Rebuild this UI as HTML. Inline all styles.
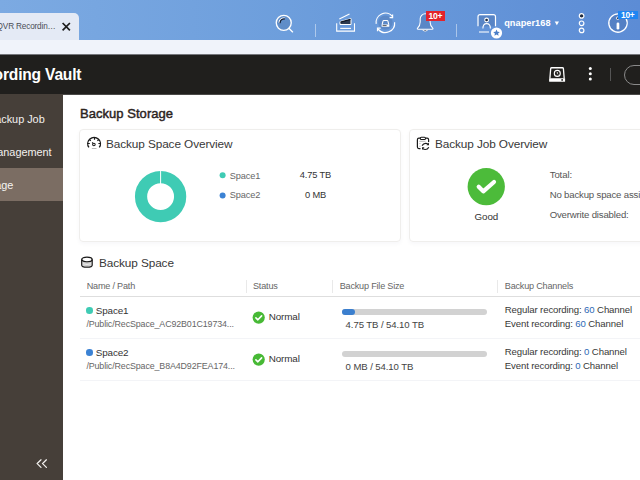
<!DOCTYPE html>
<html><head><meta charset="utf-8"><style>
html,body{margin:0;padding:0;width:640px;height:480px;overflow:hidden;background:#fff;}
body{position:relative;font-family:"Liberation Sans",sans-serif;}
.t{position:absolute;white-space:nowrap;line-height:20px;}
svg{overflow:visible;}
</style></head><body>
<div style="position:absolute;left:0px;top:0px;width:640px;height:40px;background:linear-gradient(90deg,#7caae2 0%,#6d9edc 45%,#5c8cd5 100%);"></div>
<div style="position:absolute;left:-20px;top:13px;width:99px;height:27px;background:#e4eaf5;border-top-right-radius:5px;"></div>
<div class="t" style="left:-3.4px;top:17.16px;font-size:8.2px;color:#4a4d55;font-weight:400;letter-spacing:-0.15px;">QVR Recordin&hellip;</div>
<svg style="position:absolute;left:61px;top:21px" width="10" height="10" viewBox="0 0 10 10"><path d="M1.6 2L8.9 9.3M8.9 2L1.6 9.3" stroke="#1e1e1e" stroke-width="1.7"/></svg>
<div style="position:absolute;left:0px;top:40px;width:640px;height:14px;background:#f0f3fa;"></div>
<svg style="position:absolute;left:272px;top:10px" width="26" height="26" viewBox="0 0 26 26"><circle cx="11.75" cy="12.85" r="7.5" fill="rgba(50,80,130,0.22)" stroke="#fff" fill="none" stroke-width="1.35"/><path d="M16.9 18.3L20.6 21.9" stroke="#fff" fill="none" stroke-width="1.35" stroke-linecap="round"/><path d="M7.2 12.3A4.7 4.7 0 0 1 12.3 8.1" stroke="#fff" stroke-width="1.3" fill="none" stroke-linecap="round"/><path d="M8.1 12.6A4 4 0 0 1 12.4 8.9" stroke="#1a2233" stroke-width="1.3" fill="none" stroke-linecap="round"/></svg>
<div style="position:absolute;left:314.5px;top:24px;width:1px;height:13px;background:rgba(255,255,255,0.45);"></div>
<div style="position:absolute;left:455.5px;top:24px;width:1px;height:13px;background:rgba(255,255,255,0.45);"></div>
<svg style="position:absolute;left:332px;top:8px" width="28" height="28" viewBox="0 0 28 28"><path d="M4.7 15.2V23.1H22.5V15.2" stroke="#fff" fill="none" stroke-width="1.1"/><path d="M8.2 20.4H19" stroke="#fff" fill="none" stroke-width="1.1"/><path d="M7.3 11.1L17.5 6.1" stroke="#fff" fill="none" stroke-width="1.1"/><path d="M8 13.6L19 10.6V16.5H8Z" fill="#2c3a50" stroke="#fff" stroke-width="1"/><path d="M8.5 14.2L18.5 11.4" stroke="#0e1522" stroke-width="1.2"/></svg>
<svg style="position:absolute;left:372px;top:8px" width="28" height="28" viewBox="0 0 28 28"><circle cx="13.4" cy="14.6" r="7.2" fill="rgba(50,80,130,0.22)"/><path d="M4.2 15.8A9.3 9.3 0 0 1 20.6 8.6" stroke="#fff" fill="none" stroke-width="1.2"/><path d="M20.6 6.6V9.6H17.6" stroke="#fff" fill="none" stroke-width="1.2"/><path d="M22.6 14.2A9.3 9.3 0 0 1 6.1 21" stroke="#fff" fill="none" stroke-width="1.2"/><path d="M5.5 23.3V20.2H8.7" stroke="#fff" fill="none" stroke-width="1.2"/><path d="M10.1 16.6L11 13.1Q11.2 12.5 11.8 12.5H15.1Q15.7 12.5 15.9 13.1L16.8 16.6" stroke="#fff" fill="none" stroke-width="1.1"/><rect x="9.6" y="16.4" width="7.7" height="2.4" rx="0.4" fill="#fff"/><rect x="10.6" y="17.2" width="4" height="0.9" fill="#444"/></svg>
<svg style="position:absolute;left:412px;top:8px" width="28" height="28" viewBox="0 0 28 28"><path d="M6 21.3Q5 21.3 5.4 20.4Q8.2 17.8 8.2 14V10.8A4.95 5 0 0 1 18.1 10.8V14Q18.1 17.8 20.9 20.4Q21.3 21.3 20.3 21.3Z" fill="rgba(50,80,130,0.22)" stroke="#fff" fill="none" stroke-width="1.05" stroke-linejoin="round"/><path d="M10.6 22.2Q13.15 24.2 15.7 22.2" fill="#1a2233" stroke="#fff" stroke-width="0.9"/></svg>
<div style="position:absolute;left:425.9px;top:10.9px;width:19.1px;height:9.8px;background:#e3232b;"></div>
<div class="t" style="left:428.6px;top:5.92px;font-size:8.6px;color:#fff;font-weight:700;letter-spacing:-0.3px;">10+</div>
<svg style="position:absolute;left:474px;top:11px" width="28" height="28" viewBox="0 0 28 28"><rect x="4.5" y="4.6" width="16.5" height="10.8" fill="rgba(50,80,130,0.22)"/><path d="M4 15.2V5.7A2 2 0 0 1 6 3.7H19.5A2 2 0 0 1 21.5 5.7V15.2" stroke="#fff" fill="none" stroke-width="1.2"/><circle cx="12.6" cy="9" r="1.9" fill="#1d2a40" stroke="#fff" stroke-width="1.1"/><path d="M8.9 17.6Q8.9 12.6 12.65 12.6Q16.4 12.6 16.4 17.6" stroke="#fff" fill="none" stroke-width="1.1"/><path d="M5 21H15" stroke="rgba(255,255,255,0.7)" stroke-width="1.5"/><circle cx="22.5" cy="22" r="5.6" fill="#fff"/><path d="M22.5 18.6L23.5 20.8L25.8 21L24.1 22.5L24.6 24.8L22.5 23.6L20.4 24.8L20.9 22.5L19.2 21L21.5 20.8Z" fill="#4a7ec8"/></svg>
<div class="t" style="left:504.2px;top:13.31px;font-size:9.2px;color:#fff;font-weight:700;letter-spacing:0.05px;">qnaper168</div>
<svg style="position:absolute;left:554px;top:21px" width="6" height="5" viewBox="0 0 6 5"><path d="M0.7 0.6H5L2.85 4.3Z" fill="#fff"/></svg>
<svg style="position:absolute;left:577px;top:11px" width="9" height="24" viewBox="0 0 9 24"><circle cx="4.6" cy="4.9" r="2.3" fill="#1f2a3d" stroke="#fff" stroke-width="1.2"/><circle cx="4.6" cy="12.3" r="2.3" fill="none" stroke="#fff" stroke-width="1.2"/><circle cx="4.6" cy="19.4" r="2.3" fill="none" stroke="#fff" stroke-width="1.2"/></svg>
<svg style="position:absolute;left:606px;top:11px" width="24" height="24" viewBox="0 0 24 24"><circle cx="12" cy="12" r="8.6" fill="rgba(50,80,130,0.2)"/><path d="M20.1 7.6A9.2 9.2 0 1 1 12 2.8" stroke="#fff" fill="none" stroke-width="1.3"/><circle cx="11.7" cy="7.2" r="1.3" fill="#2a3a55" stroke="#fff" stroke-width="0.9"/><rect x="10.6" y="11.5" width="2.7" height="7" rx="1.35" fill="#fff"/></svg>
<div style="position:absolute;left:618.2px;top:10.8px;width:19.7px;height:8.6px;background:#1f85f2;"></div>
<div class="t" style="left:621.0px;top:5.09px;font-size:8.4px;color:#fff;font-weight:700;letter-spacing:-0.25px;">10+</div>
<div style="position:absolute;left:0px;top:55px;width:640px;height:39px;background:#201f1d;"></div>
<div style="position:absolute;left:0px;top:54px;width:640px;height:1px;background:#75767b;"></div>
<div class="t" style="right:558.7px;top:65.09px;font-size:15.6px;color:#fff;font-weight:700;letter-spacing:-0.2px;">QVR Recording Vault</div>
<svg style="position:absolute;left:544px;top:62px" width="26" height="24" viewBox="0 0 26 24"><path d="M5.9 16.5L6.7 6.6Q6.8 5.75 7.7 5.75H18.4Q19.3 5.75 19.4 6.6L20.2 16.5" fill="none" stroke="#fff" stroke-width="1.3"/><rect x="5.1" y="16.2" width="16" height="3.6" rx="0.5" fill="#fff"/><rect x="17.3" y="17.2" width="1.7" height="1.5" fill="#201f1d"/><circle cx="13.3" cy="11.4" r="3" fill="none" stroke="#fff" stroke-width="1.1"/><path d="M13.3 10V11.5L14.2 12.2" stroke="#fff" stroke-width="0.8" fill="none"/></svg>
<svg style="position:absolute;left:587px;top:66px" width="7" height="16" viewBox="0 0 7 16"><circle cx="3.3" cy="2.5" r="1.5" fill="#fff"/><circle cx="3.3" cy="7.8" r="1.5" fill="#fff"/><circle cx="3.3" cy="13.1" r="1.5" fill="#fff"/></svg>
<div style="position:absolute;left:610px;top:68px;width:1px;height:13px;background:#555;"></div>
<div style="position:absolute;left:624px;top:65px;width:40px;height:18px;border:1px solid #8a8a8a;border-radius:10px;"></div>
<div style="position:absolute;left:0px;top:94px;width:63px;height:386px;background:#463f39;"></div>
<div style="position:absolute;left:0px;top:168px;width:63px;height:33px;background:#7b6d63;"></div>
<div class="t" style="right:595.3px;top:109.12px;font-size:10.9px;color:#f2f0ee;font-weight:400;letter-spacing:-0.02px;">Backup Job</div>
<div class="t" style="right:588.4px;top:141.92px;font-size:10.9px;color:#f2f0ee;font-weight:400;letter-spacing:-0.02px;">Space Management</div>
<div class="t" style="right:626.7px;top:175.22px;font-size:10.9px;color:#f6f4f2;font-weight:400;letter-spacing:-0.02px;">Storage</div>
<svg style="position:absolute;left:34px;top:456px" width="16" height="14" viewBox="0 0 16 14"><path d="M7 3.8L3.2 7.6L7 11.4M12.4 3.8L8.6 7.6L12.4 11.4" stroke="#f4f2f0" stroke-width="1.25" fill="none" stroke-linecap="round"/></svg>
<div style="position:absolute;left:63px;top:94px;width:577px;height:386px;background:#fff;"></div>
<div style="position:absolute;left:63px;top:94px;width:577px;height:0.8px;background:#4a4947;"></div>
<div class="t" style="left:80.0px;top:104.30px;font-size:13px;color:#2c241e;font-weight:400;letter-spacing:0.04px;-webkit-text-stroke:0.45px #2c241e;">Backup Storage</div>
<div style="position:absolute;left:79px;top:129px;width:322px;height:113px;border:1px solid #efeeec;border-radius:4px;box-sizing:border-box;box-shadow:0 2px 4px rgba(0,30,90,0.035);"></div>
<div style="position:absolute;left:409px;top:129px;width:260px;height:113px;border:1px solid #efeeec;border-radius:4px;box-sizing:border-box;box-shadow:0 2px 4px rgba(0,30,90,0.035);"></div>
<svg style="position:absolute;left:86px;top:136px" width="16" height="14" viewBox="0 0 16 14"><path d="M2.9 11.44A6.35 6.35 0 1 1 13.3 11.44" fill="none" stroke="#1a1a1a" stroke-width="1.35"/><path d="M8.5 1.2V3.7M3.2 3.35L4.8 4.8M13 3.35L11.4 4.8M1.2 7.5H3.8M15 7.5H12.4" stroke="#1a1a1a" stroke-width="1.2"/><circle cx="7.9" cy="8.45" r="1.3" fill="none" stroke="#1a1a1a" stroke-width="1.05"/><path d="M7.1 7.5L6.2 6.3" stroke="#1a1a1a" stroke-width="1.1"/><path d="M5.8 12.5H10.5" stroke="#aaa" stroke-width="0.8"/></svg>
<div class="t" style="left:106px;top:133.51px;font-size:11.8px;color:#383838;font-weight:400;letter-spacing:-0.1px;">Backup Space Overview</div>
<svg style="position:absolute;left:134px;top:169.5px" width="54" height="54" viewBox="0 0 54 54"><circle cx="26.6" cy="26.6" r="19.55" fill="none" stroke="#3fcbb4" stroke-width="12.2"/><rect x="26.1" y="0" width="1" height="14" fill="#fff"/></svg>
<svg style="position:absolute;left:218px;top:171px" width="9" height="28" viewBox="0 0 9 28"><circle cx="4.6" cy="4.2" r="3" fill="#3fcbb4"/><circle cx="4.6" cy="24.6" r="3" fill="#3b82d4"/></svg>
<div class="t" style="left:229.7px;top:165.51px;font-size:9.2px;color:#666;font-weight:400;letter-spacing:-0.12px;">Space1</div>
<div class="t" style="left:229.7px;top:185.41px;font-size:9.2px;color:#666;font-weight:400;letter-spacing:-0.12px;">Space2</div>
<div class="t" style="left:115.5px;width:400px;text-align:center;top:165.48px;font-size:9.3px;color:#333;font-weight:400;letter-spacing:-0.15px;">4.75 TB</div>
<div class="t" style="left:115.5px;width:400px;text-align:center;top:185.38px;font-size:9.3px;color:#333;font-weight:400;letter-spacing:-0.15px;">0 MB</div>
<svg style="position:absolute;left:413px;top:133px" width="22" height="20" viewBox="0 0 22 20"><path d="M7.5 15.6H5.9Q4.4 15.6 4.4 14.1V6.7Q4.4 5.2 5.9 5.2H7.3M12.5 5.2H14.1Q15.6 5.2 15.6 6.7V8.9" fill="none" stroke="#1a1a1a" stroke-width="1.2"/><rect x="7.3" y="4.2" width="5.2" height="2.3" rx="1.1" fill="none" stroke="#1a1a1a" stroke-width="1.1"/><path d="M6.3 8.3H12.5M6.3 10.6H7.5M6.3 13.3H7.5" stroke="#999" stroke-width="0.7"/><path d="M9.1 12.6Q10.3 10.3 12.6 10.3Q14.2 10.3 15 11.3" fill="none" stroke="#1a1a1a" stroke-width="1.2"/><path d="M16 9.6V12.3H13.5Z" fill="#1a1a1a"/><path d="M15.8 14.3Q14.6 16.5 12.3 16.5Q10.7 16.5 9.9 15.6" fill="none" stroke="#1a1a1a" stroke-width="1.2"/><path d="M9 16.9V14.2H11.5Z" fill="#1a1a1a"/></svg>
<div class="t" style="left:435px;top:133.51px;font-size:11.8px;color:#383838;font-weight:400;letter-spacing:-0.1px;">Backup Job Overview</div>
<svg style="position:absolute;left:466px;top:167px" width="40" height="40" viewBox="0 0 40 40"><circle cx="20.25" cy="19.65" r="18.65" fill="#4cbb3a"/><path d="M12.7 19.7L17.3 24.4L28 15" fill="none" stroke="#fff" stroke-width="4.2" stroke-linecap="round" stroke-linejoin="round"/></svg>
<div class="t" style="left:286.3px;width:400px;text-align:center;top:207.40px;font-size:9.8px;color:#333;font-weight:400;letter-spacing:-0.15px;">Good</div>
<div class="t" style="left:549.7px;top:165.07px;font-size:9.6px;color:#555;font-weight:400;letter-spacing:-0.1px;">Total:</div>
<div class="t" style="left:549.7px;top:185.27px;font-size:9.6px;color:#555;font-weight:400;letter-spacing:-0.17px;">No backup space assigned</div>
<div class="t" style="left:549.7px;top:205.17px;font-size:9.6px;color:#555;font-weight:400;letter-spacing:-0.17px;">Overwrite disabled:</div>
<svg style="position:absolute;left:79px;top:254px" width="16" height="16" viewBox="0 0 16 16"><ellipse cx="7.95" cy="5.5" rx="5.2" ry="2.3" fill="none" stroke="#1a1a1a" stroke-width="1.3"/><path d="M2.75 5.5V11.2Q2.75 13.1 7.95 13.1Q13.15 13.1 13.15 11.2V5.5" fill="none" stroke="#1a1a1a" stroke-width="1.3"/><path d="M3.5 8.8Q7.95 9.6 12.4 8.8M3.5 10.9Q7.95 11.6 12.4 10.9" fill="none" stroke="#aaa" stroke-width="0.9"/></svg>
<div class="t" style="left:99px;top:252.61px;font-size:11.8px;color:#383838;font-weight:400;letter-spacing:-0.1px;">Backup Space</div>
<div class="t" style="left:86.7px;top:276.35px;font-size:9.1px;color:#666;font-weight:400;letter-spacing:-0.2px;">Name / Path</div>
<div class="t" style="left:253px;top:276.35px;font-size:9.1px;color:#666;font-weight:400;letter-spacing:-0.2px;">Status</div>
<div class="t" style="left:339.7px;top:276.35px;font-size:9.1px;color:#666;font-weight:400;letter-spacing:-0.2px;">Backup File Size</div>
<div class="t" style="left:504.8px;top:276.35px;font-size:9.1px;color:#666;font-weight:400;letter-spacing:-0.2px;">Backup Channels</div>
<div style="position:absolute;left:245.5px;top:279.5px;width:1.2px;height:13.2px;background:#e9e9e9;"></div>
<div style="position:absolute;left:332.2px;top:279.5px;width:1.2px;height:13.2px;background:#e9e9e9;"></div>
<div style="position:absolute;left:497.3px;top:279.5px;width:1.2px;height:13.2px;background:#e9e9e9;"></div>
<div style="position:absolute;left:79.5px;top:296px;width:561px;height:1px;background:#dedede;"></div>
<div style="position:absolute;left:79.5px;top:338px;width:561px;height:1px;background:#f3f4f7;"></div>
<div style="position:absolute;left:79.5px;top:380px;width:561px;height:1px;background:#f3f4f7;"></div>
<div style="position:absolute;left:86.3px;top:307.1px;width:6.6px;height:6.6px;background:#3fcbb4;border-radius:50%;"></div>
<div class="t" style="left:95.8px;top:300.77px;font-size:9.9px;color:#333;font-weight:400;letter-spacing:-0.15px;">Space1</div>
<div class="t" style="left:86.4px;top:314.42px;font-size:8.9px;color:#666;font-weight:400;letter-spacing:-0.12px;">/Public/RecSpace_AC92B01C19734...</div>
<svg style="position:absolute;left:252px;top:311px" width="14" height="14" viewBox="0 0 14 14"><circle cx="6.7" cy="6.6" r="6.1" fill="#47b935"/><path d="M3.9 6.9L5.9 8.8L9.6 4.9" fill="none" stroke="#fff" stroke-width="1.6" stroke-linecap="round" stroke-linejoin="round"/></svg>
<div class="t" style="left:268.8px;top:307.37px;font-size:9.9px;color:#333;font-weight:400;letter-spacing:-0.15px;">Normal</div>
<div style="position:absolute;left:342.4px;top:308.5px;width:145px;height:6px;background:#d2d2d2;border-radius:3px;"></div>
<div style="position:absolute;left:342.4px;top:308.5px;width:13px;height:6px;background:#3b7fce;border-radius:3px;"></div>
<div class="t" style="left:345.6px;top:314.57px;font-size:9.6px;color:#444;font-weight:400;letter-spacing:-0.1px;">4.75 TB / 54.10 TB</div>
<div class="t" style="left:504.8px;top:300.27px;font-size:9.6px;color:#383838;font-weight:400;letter-spacing:-0.12px;">Regular recording: <span style="color:#2f6ab5">60</span> Channel</div>
<div class="t" style="left:504.8px;top:313.67px;font-size:9.6px;color:#383838;font-weight:400;letter-spacing:-0.12px;">Event recording: <span style="color:#2f6ab5">60</span> Channel</div>
<div style="position:absolute;left:86.3px;top:349.1px;width:6.6px;height:6.6px;background:#3b82d4;border-radius:50%;"></div>
<div class="t" style="left:95.8px;top:342.77px;font-size:9.9px;color:#333;font-weight:400;letter-spacing:-0.15px;">Space2</div>
<div class="t" style="left:86.4px;top:356.42px;font-size:8.9px;color:#666;font-weight:400;letter-spacing:-0.12px;">/Public/RecSpace_B8A4D92FEA174...</div>
<svg style="position:absolute;left:252px;top:353px" width="14" height="14" viewBox="0 0 14 14"><circle cx="6.7" cy="6.6" r="6.1" fill="#47b935"/><path d="M3.9 6.9L5.9 8.8L9.6 4.9" fill="none" stroke="#fff" stroke-width="1.6" stroke-linecap="round" stroke-linejoin="round"/></svg>
<div class="t" style="left:268.8px;top:349.37px;font-size:9.9px;color:#333;font-weight:400;letter-spacing:-0.15px;">Normal</div>
<div style="position:absolute;left:342.4px;top:350.5px;width:145px;height:6px;background:#d2d2d2;border-radius:3px;"></div>
<div class="t" style="left:345.6px;top:356.57px;font-size:9.6px;color:#444;font-weight:400;letter-spacing:-0.1px;">0 MB / 54.10 TB</div>
<div class="t" style="left:504.8px;top:342.27px;font-size:9.6px;color:#383838;font-weight:400;letter-spacing:-0.12px;">Regular recording: <span style="color:#2f6ab5">0</span> Channel</div>
<div class="t" style="left:504.8px;top:355.67px;font-size:9.6px;color:#383838;font-weight:400;letter-spacing:-0.12px;">Event recording: <span style="color:#2f6ab5">0</span> Channel</div>
</body></html>
